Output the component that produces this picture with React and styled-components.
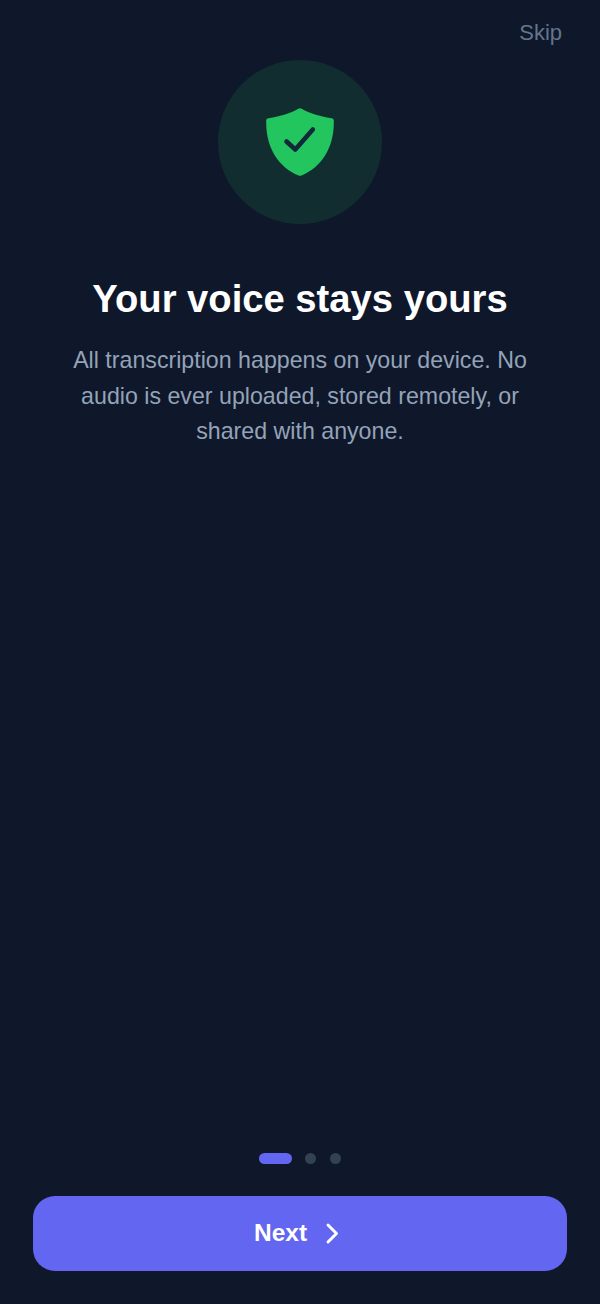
import React from "react";
import styled, { createGlobalStyle } from "styled-components";

const Global = createGlobalStyle`
  html, body { margin: 0; padding: 0; background: #0f172a; }
  * { box-sizing: border-box; }
`;

const Screen = styled.div`
  width: 600px;
  height: 1304px;
  background: #0f172a;
  font-family: "Liberation Sans", Arial, sans-serif;
  display: flex;
  flex-direction: column;
  align-items: center;
`;

const TopBar = styled.div`
  align-self: stretch;
  height: 60px;
  display: flex;
  justify-content: flex-end;
  padding: 20px 38px 0 0;
`;

const SkipButton = styled.button`
  all: unset;
  font-size: 22px;
  line-height: 26px;
  height: 26px;
  color: #64748b;
`;

const IconCircle = styled.div`
  width: 164px;
  height: 164px;
  border-radius: 50%;
  background: rgba(34, 197, 94, 0.13);
  display: flex;
  align-items: center;
  justify-content: center;
`;

const Title = styled.h1`
  margin: 51px 0 0;
  font-size: 38.2px;
  line-height: 48px;
  font-weight: 700;
  color: #ffffff;
  text-align: center;
`;

const Body = styled.p`
  margin: 20px 0 0;
  width: 480px;
  font-size: 23.2px;
  line-height: 35.5px;
  color: #94a3b8;
  text-align: center;
`;

const Spacer = styled.div`
  flex: 1;
`;

const Dots = styled.div`
  display: flex;
  align-items: center;
  gap: 13.5px;
`;

const Dot = styled.span`
  width: ${(p) => (p.$active ? "32.5px" : "11px")};
  height: 11px;
  border-radius: 6px;
  background: ${(p) => (p.$active ? "#6366f1" : "#334155")};
`;

const NextButton = styled.button`
  all: unset;
  box-sizing: border-box;
  margin: 32px 0 33px;
  width: 534px;
  height: 75px;
  padding: 0 2px 2px 0;
  border-radius: 22px;
  background: #6366f1;
  color: #ffffff;
  font-size: 24.5px;
  font-weight: 700;
  display: flex;
  align-items: center;
  justify-content: center;
  gap: 13px;
`;

const Shield = () => (
  <svg width="68" height="68" viewBox="0 0 68 68" style={{ display: "block" }}>
    <path
      d="M32.3 .8 C33.4 .1 34.6 .1 35.7 .8 C44 5.4 53 8.4 65.6 10.2 C67 10.4 67.8 11.3 67.8 12.7 C68.4 40 55 59.5 35.4 67.5 C34.5 67.9 33.5 67.9 32.6 67.5 C13 59.5 -.4 40 .2 12.7 C.2 11.3 1 10.4 2.4 10.2 C15 8.4 24 5.4 32.3 .8 Z"
      fill="#22c55e"
    />
    <path
      d="M20.5 33.5 L29.3 41.5 L46.8 21.5"
      fill="none"
      stroke="#11293a"
      strokeWidth="4.6"
      strokeLinecap="round"
      strokeLinejoin="round"
    />
  </svg>
);

const Chevron = () => (
  <svg width="24" height="24" viewBox="0 0 24 24" style={{ display: "block" }}>
    <path d="M8 4 L16.5 12.5 L8 21" fill="none" stroke="#fff" strokeWidth="2.9" strokeLinecap="round" strokeLinejoin="round" />
  </svg>
);

export default function App() {
  return (
    <Screen>
      <Global />
      <TopBar>
        <SkipButton>Skip</SkipButton>
      </TopBar>
      <IconCircle>
        <Shield />
      </IconCircle>
      <Title>Your voice stays yours</Title>
      <Body>
        All transcription happens on your device. No audio is ever uploaded, stored remotely, or shared with anyone.
      </Body>
      <Spacer />
      <Dots>
        <Dot $active />
        <Dot />
        <Dot />
      </Dots>
      <NextButton>
        Next
        <Chevron />
      </NextButton>
    </Screen>
  );
}
